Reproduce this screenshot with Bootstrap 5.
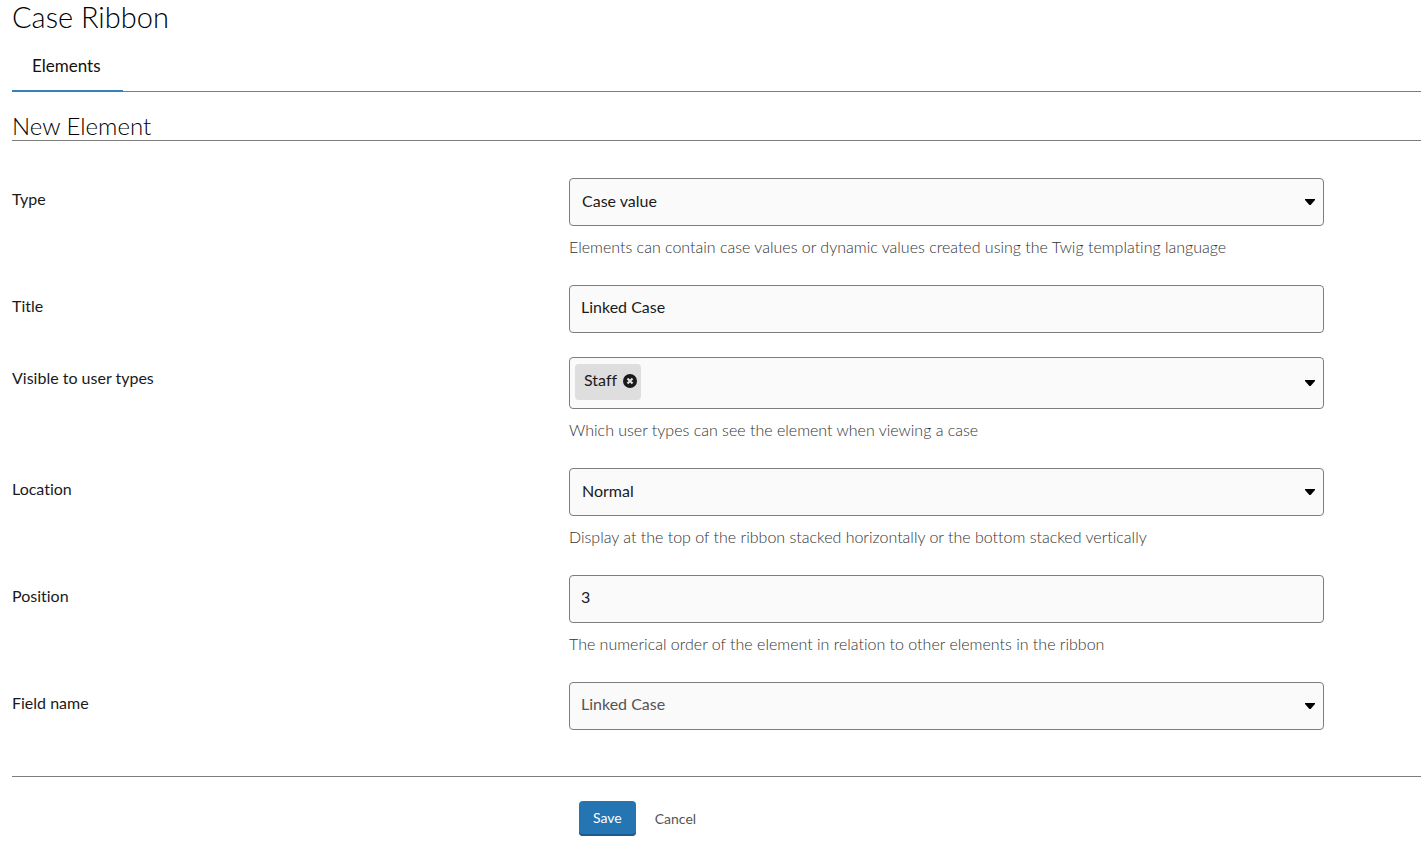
<!DOCTYPE html>
<html lang="en">
<head>
<meta charset="utf-8">
<meta name="viewport" content="width=device-width, initial-scale=1">
<title>Case Ribbon</title>
<link href="https://cdn.jsdelivr.net/npm/bootstrap@5.3.0/dist/css/bootstrap.min.css" rel="stylesheet">
<style>
  :root { --line: #7d7d7d; --caret: url("data:image/svg+xml,%3Csvg xmlns='http://www.w3.org/2000/svg' viewBox='0 0 10 6'%3E%3Cpath d='M0 0h10v1L5.600 6H4.400L0 1z'/%3E%3C/svg%3E"); }
  body { font-family: Lato, "Liberation Sans", sans-serif; font-size: 16px; line-height: 24px; font-variant-ligatures: none; color: #1a1a1a; background: #fff; }
  .page { padding-left: 12px; }
  .page-title { font-size: 29px; line-height: 34px; font-weight: 300; color: #000; }
  .tabs { --bs-nav-tabs-border-color: var(--line); margin-top: 8px; }
  .tabs .nav-link { font-size: 17px; line-height: 24px; padding: 12px 22px 12px 20px; border: 0; border-bottom: 2px solid #3182bd; border-radius: 0; color: #111; }
  .section-title { font-size: 24px; line-height: 28px; font-weight: 300; color: #000; margin-top: 20px; border-bottom: 1px solid var(--line); }
  .fields { padding-top: 37px; padding-bottom: 22px; border-bottom: 1px solid var(--line); }
  .field-row { display: grid; grid-template-columns: 557fr 755fr 97fr; margin-bottom: 24px; }
  .field-row > label { padding-top: 9px; justify-self: start; }
  .box { background-color: #fafafa; border: 1px solid var(--line); border-radius: 4px; color: #1a1a1a; min-height: 48px; }
  .form-control.box, .form-select.box { font-size: 16px; line-height: 24px; padding: 9px 32px 13px 11px; }
  .form-select.box, .tag-box { background-image: var(--caret); background-repeat: no-repeat; background-position: right 8px center; background-size: 10px 6px; }
  .form-select.box { padding: 10px 32px 12px 12px; }
  .form-select.unset { color: #555; padding: 9px 32px 13px 11px; }
  .tag-box { min-height: 52px; padding: 6px 32px 8px 5px; }
  .tag { background: #dedede; border-radius: 4px; height: 36px; padding: 4px 4px 8px 9px; gap: 6px; }
  .tag button { margin-top: 2px; }
  .tag-box input { background: none; outline: 0; min-width: 0; }
  .hint { margin-top: 9px; height: 26px; font-weight: 300; color: #333; }
  .actions { display: flex; align-items: center; gap: 19px; padding: 24px 0 0 10px; }
  .actions .btn, .actions a { font-size: 14px; line-height: 20px; }
  .save { --bs-btn-bg: #2575b2; height: 35px; padding: 6px 14px 8px; border-radius: 4px; box-shadow: inset 0 -2px 0 #1b5b90; border: 0; }
  .cancel { color: #555; }
</style>
</head>
<body>
<main class="page">
  <h1 class="page-title mb-0">Case Ribbon</h1>
  <ul class="nav nav-tabs tabs">
    <li class="nav-item"><a class="nav-link" href="#" aria-current="page">Elements</a></li>
  </ul>
  <h2 class="section-title mb-0">New Element</h2>
  <form>
    <div class="fields">
      <div class="field-row">
        <label for="type">Type</label>
        <div>
          <select class="form-select box" id="type"><option>Case value</option><option>Dynamic value</option></select>
          <div class="hint">Elements can contain case values or dynamic values created using the Twig templating language</div>
        </div>
      </div>
      <div class="field-row">
        <label for="title">Title</label>
        <div><input class="form-control box" id="title" type="text" value="Linked Case"></div>
      </div>
      <div class="field-row">
        <label for="user-types">Visible to user types</label>
        <div>
          <div class="box tag-box d-flex">
            <span class="tag d-flex align-items-center">Staff
              <button type="button" class="border-0 p-0 bg-transparent d-flex" aria-label="Remove Staff">
                <svg width="14" height="14" viewBox="0 0 14 14"><circle cx="7" cy="7" r="7" fill="#1a1a1a"/><path d="M4.500 4.500l5 5M9.500 4.500l-5 5" stroke="#dedede" stroke-width="2.200"/></svg>
              </button>
            </span>
            <input class="border-0 flex-grow-1" id="user-types" type="text">
          </div>
          <div class="hint">Which user types can see the element when viewing a case</div>
        </div>
      </div>
      <div class="field-row">
        <label for="location">Location</label>
        <div>
          <select class="form-select box" id="location"><option>Normal</option></select>
          <div class="hint">Display at the top of the ribbon stacked horizontally or the bottom stacked vertically</div>
        </div>
      </div>
      <div class="field-row">
        <label for="position">Position</label>
        <div>
          <input class="form-control box" id="position" type="text" value="3">
          <div class="hint">The numerical order of the element in relation to other elements in the ribbon</div>
        </div>
      </div>
      <div class="field-row">
        <label for="field-name">Field name</label>
        <div><select class="form-select box unset" id="field-name"><option>Linked Case</option></select></div>
      </div>
    </div>
    <div class="field-row mb-0">
      <span></span>
      <div class="actions">
        <button class="btn btn-primary save" type="submit">Save</button>
        <a class="cancel text-decoration-none" href="#">Cancel</a>
      </div>
    </div>
  </form>
</main>
<script src="https://cdn.jsdelivr.net/npm/bootstrap@5.3.0/dist/js/bootstrap.bundle.min.js"></script>
</body>
</html>
